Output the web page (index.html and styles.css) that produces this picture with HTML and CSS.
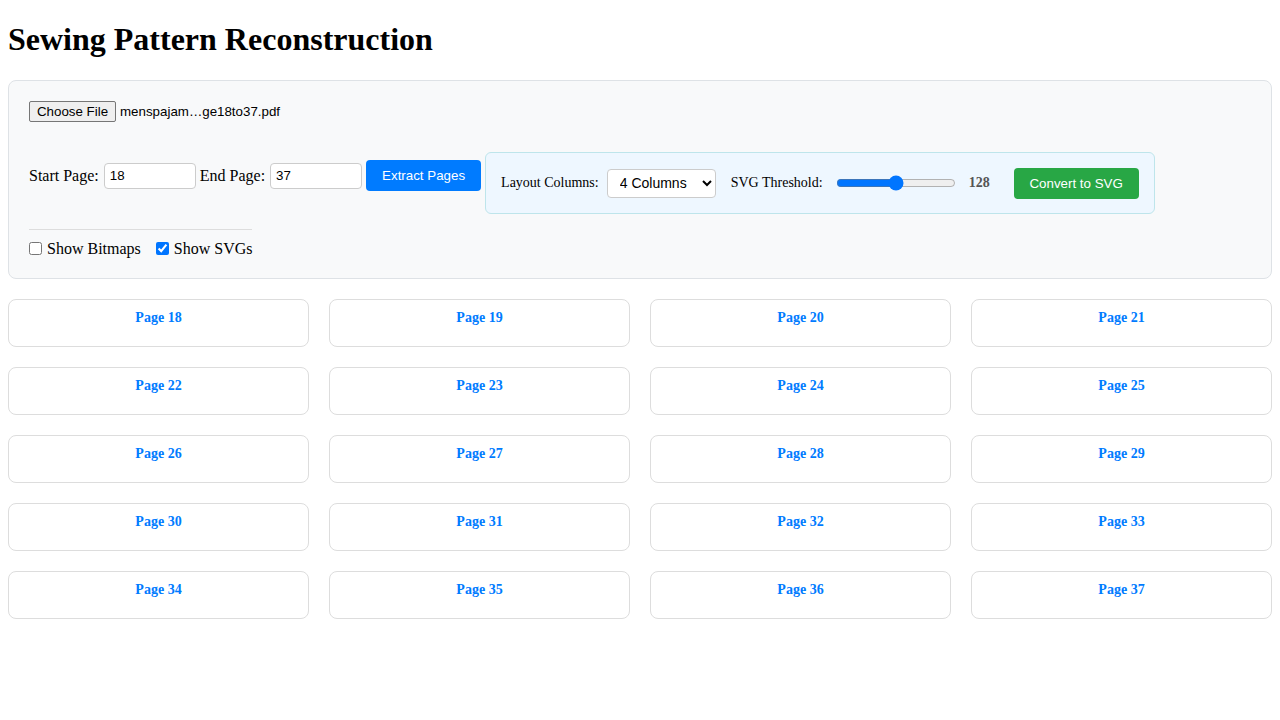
FILE: index.html
```html
<!DOCTYPE html>
<html>
<head>
<meta charset="utf-8">
<title>Sewing Pattern Reconstruction</title>
<link rel="stylesheet" href="styles.css">
</head>
<body>
<h1 class="title">Sewing Pattern Reconstruction</h1>
<div class="panel">
  <div class="file-row">
    <button class="file-btn" type="button">Choose File</button>
    <span class="file-name">menspajam…ge18to37.pdf</span>
  </div>
  <div class="controls">
    <div class="range-group">
      <label class="lbl">Start Page:</label>
      <input class="num" type="text" value="18">
      <label class="lbl">End Page:</label>
      <input class="num" type="text" value="37">
      <button class="btn btn-blue" type="button">Extract Pages</button>
    </div>
    <div class="settings">
      <label class="s-lbl">Layout Columns:</label>
      <select class="sel"><option>4 Columns</option></select>
      <label class="s-lbl s-gap">SVG Threshold:</label>
      <input class="slider" type="range" min="0" max="255" value="128">
      <span class="val">128</span>
      <button class="btn btn-green" type="button">Convert to SVG</button>
    </div>
  </div>
  <div class="checks">
    <label class="chk"><input type="checkbox">Show Bitmaps</label>
    <label class="chk"><input type="checkbox" checked>Show SVGs</label>
  </div>
</div>
<div class="grid">
  <div class="card"><h3 class="card-title">Page 18</h3></div>
  <div class="card"><h3 class="card-title">Page 19</h3></div>
  <div class="card"><h3 class="card-title">Page 20</h3></div>
  <div class="card"><h3 class="card-title">Page 21</h3></div>
  <div class="card"><h3 class="card-title">Page 22</h3></div>
  <div class="card"><h3 class="card-title">Page 23</h3></div>
  <div class="card"><h3 class="card-title">Page 24</h3></div>
  <div class="card"><h3 class="card-title">Page 25</h3></div>
  <div class="card"><h3 class="card-title">Page 26</h3></div>
  <div class="card"><h3 class="card-title">Page 27</h3></div>
  <div class="card"><h3 class="card-title">Page 28</h3></div>
  <div class="card"><h3 class="card-title">Page 29</h3></div>
  <div class="card"><h3 class="card-title">Page 30</h3></div>
  <div class="card"><h3 class="card-title">Page 31</h3></div>
  <div class="card"><h3 class="card-title">Page 32</h3></div>
  <div class="card"><h3 class="card-title">Page 33</h3></div>
  <div class="card"><h3 class="card-title">Page 34</h3></div>
  <div class="card"><h3 class="card-title">Page 35</h3></div>
  <div class="card"><h3 class="card-title">Page 36</h3></div>
  <div class="card"><h3 class="card-title">Page 37</h3></div>
</div>
</body>
</html>
```

FILE: styles.css
```css
html {
  margin: 0;
  padding: 0;
}

body {
  margin: 0;
  padding: 0 8px 8px;
  font-family: "Liberation Serif", "Times New Roman", serif;
  font-size: 16px;
  color: #000;
  background: #fff;
}

.title {
  font-size: 32px;
  font-weight: bold;
  margin: 0;
  padding: 21px 0 22px;
  line-height: 37px;
}

.panel {
  background: #f8f9fa;
  border: 1px solid #dee2e6;
  border-radius: 8px;
  padding: 20px;
}

.file-row {
  display: flex;
  align-items: center;
  gap: 4px;
  height: 21px;
  margin-bottom: 30px;
}

.file-btn {
  font-family: "Liberation Sans", Arial, sans-serif;
  font-size: 13.33px;
  height: 21px;
  width: 87px;
  padding: 1px 0;
  background: #efefef;
  border: 1px solid #767676;
  border-radius: 2px;
  color: #000;
  white-space: nowrap;
  text-align: center;
}

.file-name {
  font-family: "Liberation Sans", Arial, sans-serif;
  font-size: 13.33px;
}

.controls {
  display: flex;
  align-items: flex-start;
  gap: 4px;
}

.range-group {
  display: flex;
  align-items: center;
  gap: 4px;
  margin-top: 8px;
}

.lbl {
  font-size: 16px;
}

.num {
  width: 92px;
  height: 26px;
  box-sizing: border-box;
  padding: 4px 5px;
  margin-left: 1px;
  border: 1px solid #ccc;
  border-radius: 4px;
  font-family: "Liberation Sans", Arial, sans-serif;
  font-size: 13.33px;
  background: #fff;
}

.btn {
  font-family: "Liberation Sans", Arial, sans-serif;
  font-size: 13.33px;
  color: #fff;
  border: none;
  border-radius: 4px;
  padding: 0;
  height: 31px;
  white-space: nowrap;
  text-align: center;
  cursor: pointer;
}

.btn-blue {
  background: #007bff;
  width: 115px;
}

.btn-green {
  background: #28a745;
  width: 125px;
  margin-left: 24px;
}

.settings {
  display: flex;
  align-items: center;
  height: 60px;
  padding: 0 15px;
  background: #eef7ff;
  border: 1px solid #bee5eb;
  border-radius: 6px;
}

.s-lbl {
  font-size: 14px;
  margin-right: 8px;
  white-space: nowrap;
}

.s-gap {
  margin-left: 15px;
  margin-right: 11px;
}

.sel {
  width: 109px;
  height: 29px;
  padding: 0 8px;
  border: 1px solid #ccc;
  border-radius: 4px;
  background: #fff;
  font-family: "Liberation Sans", Arial, sans-serif;
  font-size: 14px;
  color: #000;
}

.slider {
  width: 120px;
  margin: 2px;
}

.val {
  font-size: 14px;
  font-weight: bold;
  color: #555;
  margin-left: 11px;
}

.checks {
  display: flex;
  width: fit-content;
  margin-top: 15px;
  padding-top: 9px;
  border-top: 1px solid #ddd;
  gap: 15px;
  line-height: 18px;
}

.chk {
  display: flex;
  align-items: center;
}

.chk input {
  margin: 3px 5px 3px 0;
  width: 13px;
  height: 13px;
}

.grid {
  display: grid;
  grid-template-columns: repeat(4, 1fr);
  gap: 20px;
  margin-top: 20px;
}

.card {
  border: 1px solid #ddd;
  border-radius: 8px;
  padding: 10px;
  background: #fff;
}

.card-title {
  margin: 0 0 10px;
  font-size: 14px;
  line-height: 16px;
  font-weight: bold;
  color: #007bff;
  text-align: center;
}
```
